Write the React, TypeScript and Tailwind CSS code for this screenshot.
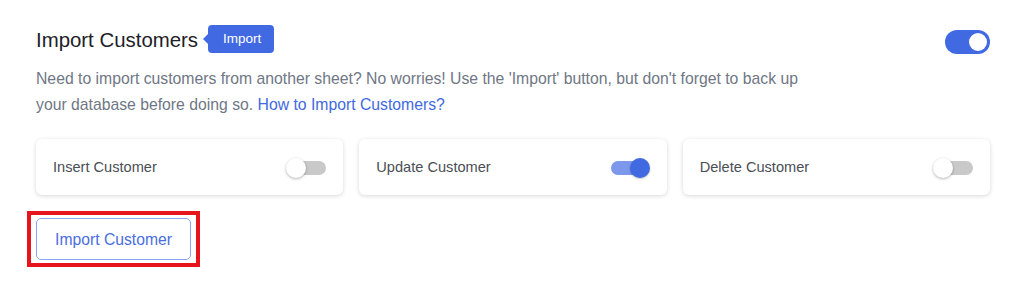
import { useState } from 'react';

type SwitchProps = {
  readonly on: boolean;
  readonly onToggle: () => void;
};

// Small material-style switch used inside the option cards.
function SmallSwitch({ on, onToggle }: SwitchProps): React.ReactElement {
  return (
    <button
      type="button"
      onClick={onToggle}
      className="relative flex h-5 w-[40px] items-center"
      aria-pressed={on}
    >
      <span
        className={
          on
            ? 'absolute left-[1px] right-[4px] h-[14px] rounded-full bg-[#7c97ec]'
            : 'absolute left-[2px] right-0 h-[14px] rounded-full bg-[#c9c9c9]'
        }
      />
      <span
        className={
          on
            ? 'absolute right-0 h-5 w-5 rounded-full bg-[#4169e1] shadow-[0_1px_2px_rgba(0,0,0,0.25)]'
            : 'absolute left-0 h-5 w-5 rounded-full bg-white shadow-[0_1px_3px_rgba(0,0,0,0.3)]'
        }
      />
    </button>
  );
}

function OptionCard({ label, on, onToggle }: { label: string } & SwitchProps): React.ReactElement {
  return (
    <div className="flex h-[56px] items-center justify-between rounded-md bg-white px-[17px] pt-[2px] shadow-[0_1px_4px_rgba(0,0,0,0.16)]">
      <span className="text-[14.6px] text-[#4a4e55]">{label}</span>
      <SmallSwitch on={on} onToggle={onToggle} />
    </div>
  );
}

export default function App(): React.ReactElement {
  const [enabled, setEnabled] = useState(true);
  const [insert, setInsert] = useState(false);
  const [update, setUpdate] = useState(true);
  const [remove, setRemove] = useState(false);

  return (
    <div className="min-h-[287px] bg-white pl-9 pr-[34px] pt-[24px] font-['Liberation_Sans',Arial,sans-serif]">
      <div className="flex h-[32px] items-center justify-between">
        <div className="flex items-center">
          <h2 className="text-[20.4px] leading-none text-[#1d2128]">Import Customers</h2>
          <span className="relative mb-[2px] ml-[10px] flex h-[28px] items-center rounded-[4px] bg-[#4169e1] pl-[15px] pr-[13px] text-[13.5px] text-white">
            <span className="absolute left-[-5px] top-1/2 h-0 w-0 -translate-y-1/2 border-y-[6px] border-r-[6px] border-y-transparent border-r-[#4169e1]" />
            Import
          </span>
        </div>
        <button
          type="button"
          onClick={() => setEnabled((v) => !v)}
          className={
            enabled
              ? 'mt-[4px] flex h-[24px] w-[45px] items-center justify-end rounded-full bg-[#4169e1] px-[3px]'
              : 'mt-[4px] flex h-[24px] w-[45px] items-center justify-start rounded-full bg-[#c9c9c9] px-[3px]'
          }
        >
          <span className="h-[18px] w-[18px] rounded-full bg-white" />
        </button>
      </div>

      <p className="mt-[10px] max-w-[790px] text-[15.75px] leading-[26px] text-[#6f7785]">
        Need to import customers from another sheet? No worries! Use the 'Import' button, but don't forget to back up
        your database before doing so.{' '}
        <a href="#" className="text-[#4169e1]">How to Import Customers?</a>
      </p>

      <div className="mt-[21px] grid grid-cols-3 gap-4">
        <OptionCard label="Insert Customer" on={insert} onToggle={() => setInsert((v) => !v)} />
        <OptionCard label="Update Customer" on={update} onToggle={() => setUpdate((v) => !v)} />
        <OptionCard label="Delete Customer" on={remove} onToggle={() => setRemove((v) => !v)} />
      </div>

      <div className="-ml-[9px] mt-[16px] inline-block border-4 border-[#e8141c] px-[5px] py-[3px]">
        <button
          type="button"
          className="h-[42px] w-[155px] rounded-[5px] border border-[#8ea3ee] bg-white pt-[1px] text-[15.7px] text-[#4a6ee0]"
        >
          Import Customer
        </button>
      </div>
    </div>
  );
}
